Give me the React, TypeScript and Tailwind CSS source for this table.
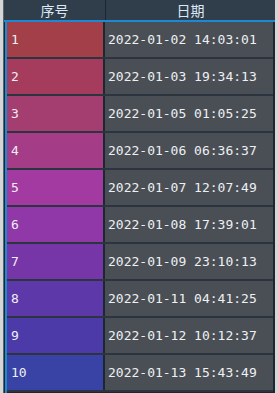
const rows = [
  { id: 1, date: "2022-01-02 14:03:01", bg: "bg-[#a23f49]" },
  { id: 2, date: "2022-01-03 19:34:13", bg: "bg-[#a53c5e]" },
  { id: 3, date: "2022-01-05 01:05:25", bg: "bg-[#a43d70]" },
  { id: 4, date: "2022-01-06 06:36:37", bg: "bg-[#a53c87]" },
  { id: 5, date: "2022-01-07 12:07:49", bg: "bg-[#a33aa2]" },
  { id: 6, date: "2022-01-08 17:39:01", bg: "bg-[#9138a8]" },
  { id: 7, date: "2022-01-09 23:10:13", bg: "bg-[#7636a8]" },
  { id: 8, date: "2022-01-11 04:41:25", bg: "bg-[#5d38a8]" },
  { id: 9, date: "2022-01-12 10:12:37", bg: "bg-[#4b3aa8]" },
  { id: 10, date: "2022-01-13 15:43:49", bg: "bg-[#3943a6]" },
];

export default function App() {
  return (
    <div className="flex h-[393px] w-[278px] bg-[#d6d6d6] px-[3px]">
      <div className="flex flex-1 flex-col overflow-hidden border-l border-[#5a6570] bg-[#1d2731]">
        {/* header */}
        <div className="flex h-[22px] shrink-0 border-b-2 border-[#1b8ad3] bg-[#303d4a] font-['Noto_Sans_CJK_SC',sans-serif] text-[14px] leading-[18px] text-[#dce8f5]">
          <div className="flex w-[102px] items-center justify-center border-r border-[#1d2731]">序号</div>
          <div className="flex flex-1 items-center justify-center">日期</div>
        </div>
        {/* body */}
        <div className="ml-[1px] mr-[2px] flex flex-1 flex-col border-l-2 border-[#1b8ad3] font-['DejaVu_Sans_Mono',monospace] text-[13px] text-[#eef0f2]">
          {rows.map((r) => (
            <div key={r.id} className="flex h-[37px] shrink-0 border-b-2 border-[#2c353f]">
              <div className={`flex w-[96px] items-center pl-[4px] ${r.bg}`}>{r.id}</div>
              <div className="ml-[2px] flex flex-1 items-center bg-[#4a4f56] pl-[3px]">{r.date}</div>
            </div>
          ))}
        </div>
      </div>
    </div>
  );
}
